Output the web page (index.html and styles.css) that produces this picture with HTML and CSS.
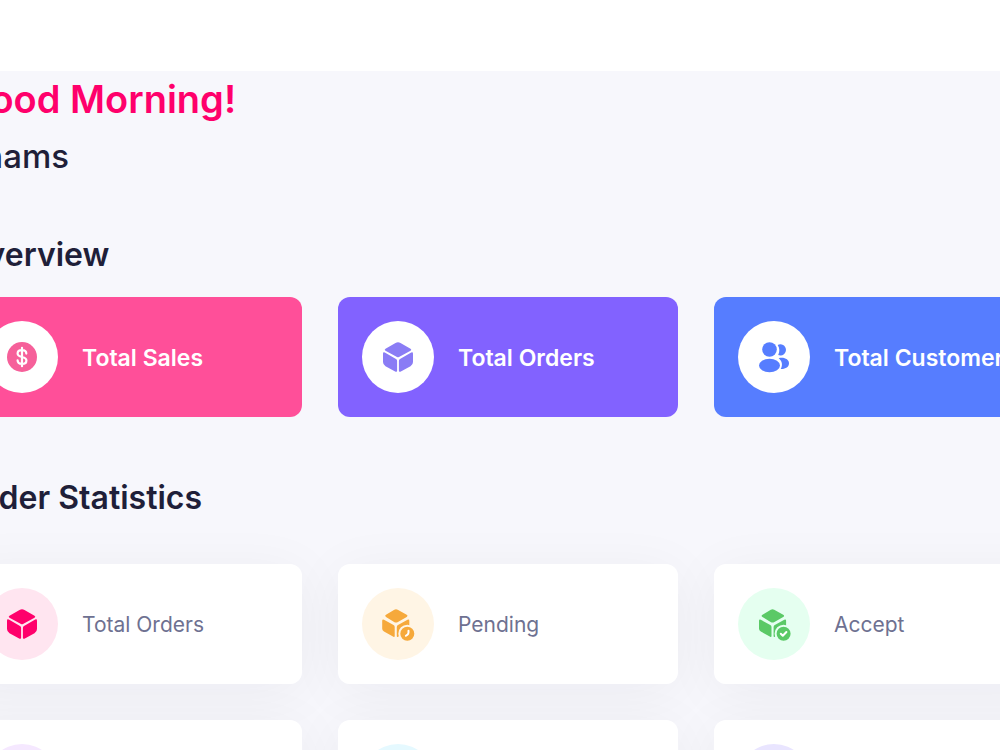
FILE: index.html
```html
<!DOCTYPE html>
<html lang="en">
<head>
  <meta charset="UTF-8">
  <meta name="viewport" content="width=device-width, initial-scale=1.0">
  <title>Dashboard</title>
  <link rel="stylesheet" href="styles.css">
</head>
<body>
  <header class="topbar"></header>

  <main class="content">
    <div class="greeting">
      <h1>Good Morning!</h1>
      <p>Shams</p>
    </div>

    <section class="overview">
      <h2>Overview</h2>
      <div class="cards">
        <div class="card pink">
          <span class="icon">
            <svg viewBox="0 0 36 36">
              <circle cx="18" cy="18" r="15" fill="#f6609a"/>
              <path d="M18 8.800v18.400M22.300 14.600c0-2.200-1.800-3.500-4.300-3.500s-4.400 1.200-4.400 3.300c0 4.800 8.800 2.400 8.800 7 0 2.400-2 3.500-4.400 3.500s-4.400-1.300-4.400-3.600" fill="none" stroke="#fff" stroke-width="2.200" stroke-linecap="round"/>
            </svg>
          </span>
          <h3>Total Sales</h3>
        </div>
        <div class="card purple">
          <span class="icon">
            <svg viewBox="0 0 36 36" fill="#8a7cf5">
              <path d="M5.500 9.700 15.500 4q2.500-1.400 5 0L30.500 9.700q1.600 1 0 2L19 18q-1 .6-2 0L5.500 11.700q-1.600-1 0-2z"/>
              <path d="M4.800 13.600 16 20q1.100.6 1.100 1.800v10q0 1.500-1.500.9L5.500 27.200Q3 25.800 3 23v-8.200q0-2 1.800-1.200zM31.200 13.600 20 20q-1.100.6-1.100 1.800v10q0 1.500 1.500.9L30.500 27.200Q33 25.800 33 23v-8.200q0-2-1.800-1.200z"/>
            </svg>
          </span>
          <h3>Total Orders</h3>
        </div>
        <div class="card blue">
          <span class="icon">
            <svg viewBox="0 0 36 36" fill="#567dff">
              <circle cx="13.500" cy="10.500" r="7.300"/>
              <ellipse cx="13.500" cy="26.500" rx="10.500" ry="6.800"/>
              <path d="M21.700 5.900a5.600 5.600 0 1 1 .5 10.100c1.600-3.300 1.600-7-.5-10.100zM22.700 19.200c5.800-1.400 10.300 1.400 10.300 5.100 0 3.800-3.700 6-8.300 5.700 2-3.400 1.800-7.800-2-10.800z"/>
            </svg>
          </span>
          <h3>Total Customers</h3>
        </div>
      </div>
    </section>

    <section class="statistics">
      <h2>Order Statistics</h2>
      <div class="cards">
        <div class="card">
          <span class="icon rose">
            <svg viewBox="0 0 36 36" fill="#ff006b">
              <path d="M5.500 9.700 15.500 4q2.500-1.400 5 0L30.500 9.700q1.600 1 0 2L19 18q-1 .6-2 0L5.500 11.700q-1.600-1 0-2z"/>
              <path d="M4.800 13.600 16 20q1.100.6 1.100 1.800v10q0 1.500-1.500.9L5.500 27.200Q3 25.800 3 23v-8.200q0-2 1.800-1.200zM31.200 13.600 20 20q-1.100.6-1.100 1.800v10q0 1.500 1.500.9L30.500 27.200Q33 25.800 33 23v-8.200q0-2-1.800-1.200z"/>
            </svg>
          </span>
          <h4>Total Orders</h4>
        </div>
        <div class="card">
          <span class="icon orange">
            <svg viewBox="0 0 36 36" fill="#f6a93b">
              <path d="M6 8.800 14.300 3.700q1.700-1 3.400 0L26.700 8.800q1.800 1.100 0 2.200L17.500 16.200q-1.500.8-3 0L6 11q-1.800-1.100 0-2.200z"/>
              <path d="M4 13.700 13.500 19.100q1.200.7 1.200 2v8.800q0 1.400-1.300.8L4 25.500q-1.800-1-1.800-2.700v-8q0-1.800 1.800-1.100zM27.500 13.700 18 19.100q-1.200.7-1.200 2v8.800q0 1.400 1.300.8L27.500 25.500q1.800-1 1.800-2.700v-8q0-1.800-1.800-1.100z"/>
              <circle class="ring" cx="27.300" cy="27.700" r="8"/>
              <path d="M28.500 24.800v1.700q0 1.500-1.200 2.300l-1.400 1" fill="none" stroke="#fff" stroke-width="2" stroke-linecap="round" stroke-linejoin="round"/>
            </svg>
          </span>
          <h4>Pending</h4>
        </div>
        <div class="card">
          <span class="icon green">
            <svg viewBox="0 0 36 36" fill="#5bc966">
              <path d="M6.500 8.800 14.800 3.700q1.700-1 3.400 0L27.200 8.800q1.800 1.100 0 2.200L18 16.200q-1.500.8-3 0L6.500 11q-1.800-1.100 0-2.200z"/>
              <path d="M4.800 13.700 14.300 19.100q1.200.7 1.200 2v8.800q0 1.400-1.300.8L4.800 25.500Q3 24.500 3 22.800v-8q0-1.800 1.800-1.100zM28.300 13.700 18.800 19.100q-1.200.7-1.200 2v8.800q0 1.400 1.300.8L28.300 25.500q1.800-1 1.800-2.700v-8q0-1.800-1.800-1.100z"/>
              <circle class="ring" cx="27.600" cy="27.700" r="8"/>
              <path d="m24.800 27.800 2 2 3.600-3.800" fill="none" stroke="#fff" stroke-width="2" stroke-linecap="round" stroke-linejoin="round"/>
            </svg>
          </span>
          <h4>Accept</h4>
        </div>
        <div class="card"><span class="icon lilac"></span></div>
        <div class="card"><span class="icon cyan"></span></div>
        <div class="card"><span class="icon indigo"></span></div>
      </div>
    </section>
  </main>
</body>
</html>
```

FILE: styles.css
```css
* {
  box-sizing: border-box;
  margin: 0;
  padding: 0;
}

body {
  height: 100vh;
  overflow: hidden;
  background-color: #f7f7fc;
  color: #1f1f39;
  font-family: Inter, "Liberation Sans", sans-serif;
}

.topbar {
  height: 71px;
  background-color: #fff;
}

/* the content runs past both sides of the window */
.content {
  margin: 0 -54px 0 -38px;
}

.greeting {
  padding-top: 3px;
}

h1 {
  color: #ff006b;
  font-size: 38px;
  font-weight: 600;
  line-height: 50px;
}

.greeting p {
  margin-top: 10px;
  font-size: 33px;
  font-weight: 500;
  line-height: 44px;
}

h2 {
  font-size: 32px;
  font-weight: 600;
  line-height: 44px;
}

.overview {
  padding-top: 55px;
}

.overview .cards {
  margin-top: 20px;
}

.statistics {
  padding-top: 59px;
}

.statistics .cards {
  margin-top: 44px;
}

.cards {
  display: grid;
  grid-template-columns: repeat(3, 1fr);
  gap: 36px;
  isolation: isolate;
}

.card {
  position: relative;
  display: flex;
  align-items: center;
  gap: 24px;
  padding: 24px;
  border-radius: 12px;
  background-color: #fff;
  white-space: nowrap;
}

/* shadow sits below every card, so it never tints a neighbour */
.statistics .card::before {
  content: "";
  position: absolute;
  inset: 0;
  z-index: -1;
  border-radius: 12px;
  box-shadow: 0 8px 56px rgba(20, 20, 43, 0.05);
}

.card.pink { background-color: #ff4f99; }
.card.purple { background-color: #8262ff; }
.card.blue { background-color: #567dff; }

.icon {
  display: flex;
  flex-shrink: 0;
  align-items: center;
  justify-content: center;
  width: 72px;
  height: 72px;
  border-radius: 50%;
  background-color: #fff;
}

.icon svg {
  width: 36px;
  height: 36px;
}

.ring {
  stroke-width: 2;
}

.rose { background-color: #ffe5f0; }
.orange { background-color: #fff5e5; }
.green { background-color: #e5fff0; }
.lilac { background-color: #f5e8ff; }
.cyan { background-color: #e5f9ff; }
.indigo { background-color: #e9e5ff; }

.orange .ring { stroke: #fff5e5; }
.green .ring { stroke: #e5fff0; }

h3,
h4 {
  padding-top: 2px;
  line-height: 32px;
}

h3 {
  color: #fff;
  font-size: 23px;
  font-weight: 600;
}

h4 {
  color: #6e7191;
  font-size: 21px;
  font-weight: 400;
}
```
